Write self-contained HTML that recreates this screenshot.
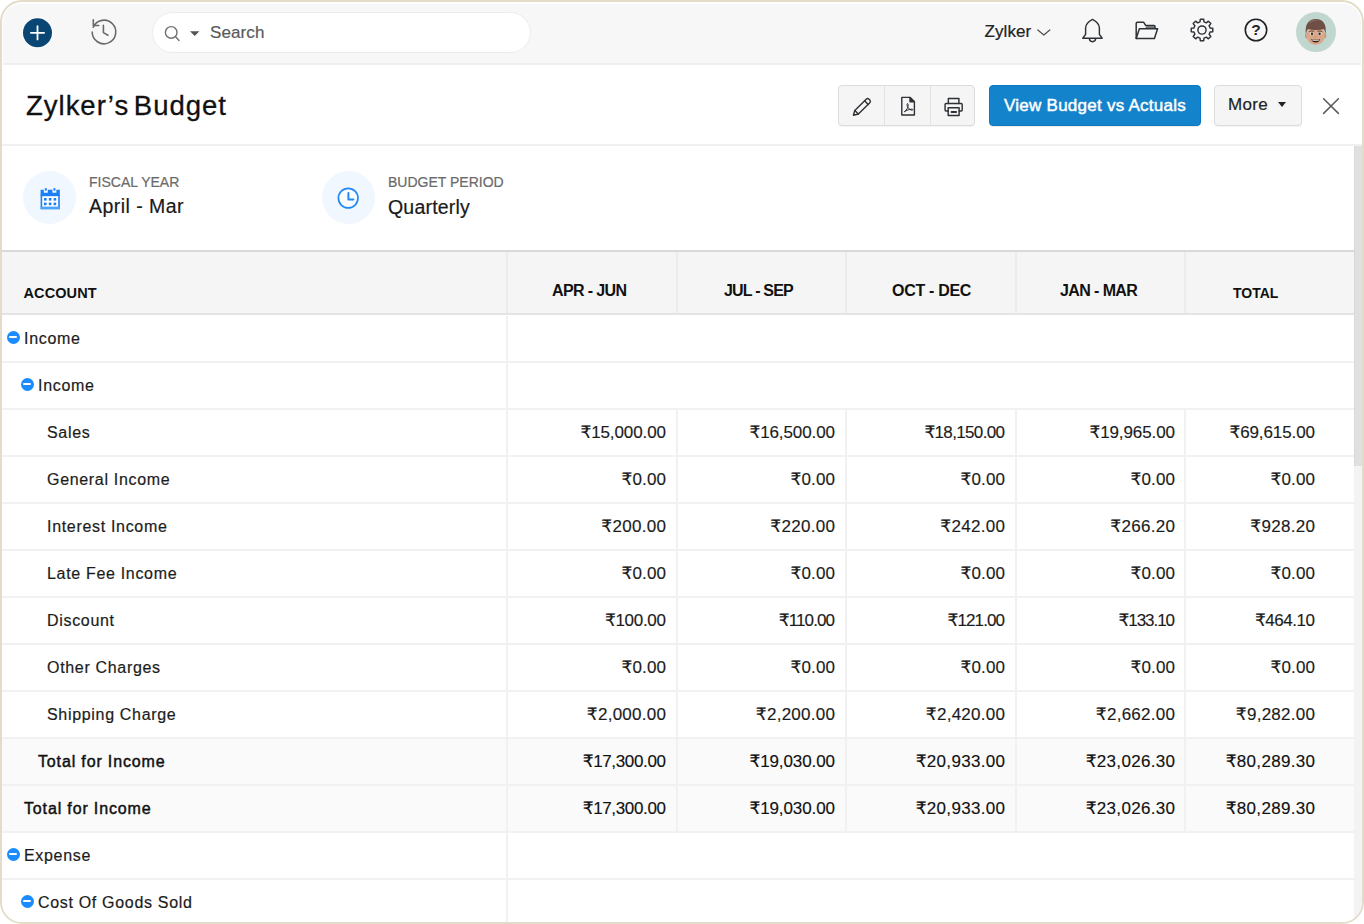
<!DOCTYPE html>
<html lang="en">
<head>
<meta charset="utf-8">
<title>Zylker's Budget</title>
<style>
*{box-sizing:border-box;margin:0;padding:0}
html,body{width:1364px;height:924px;overflow:hidden;background:#fff}
body{font-family:"Liberation Sans","DejaVu Sans",sans-serif;color:#1a1a1a;position:relative}
.frame{position:absolute;left:0;top:0;width:1364px;height:924px;border:2px solid #e3dcc9;border-radius:22px;overflow:hidden;background:#fff}
.abs{position:absolute}
.topbar{position:absolute;left:1px;top:2px;width:1358px;height:61px;background:#f7f7f7;border-bottom:2px solid #efefef;border-radius:18px 18px 0 0}
.topbar .in{position:absolute;left:-1px;top:-2px;width:1px;height:1px}
.search{position:absolute;left:150px;top:10px;width:379px;height:41px;border:1px solid #ebebeb;border-radius:21px;background:#fff}
.search span{position:absolute;left:57px;top:10px;font-size:17px;line-height:20px;color:#5a5a5a;letter-spacing:0.1px;-webkit-text-stroke:0.2px #5a5a5a}
.org{position:absolute;left:982.5px;top:19px;font-size:17px;line-height:22px;color:#222;letter-spacing:0.1px;-webkit-text-stroke:0.2px #222}
.title{position:absolute;left:24px;top:86px;font-size:27.5px;line-height:36px;letter-spacing:0.99px;word-spacing:-4px;-webkit-text-stroke:0.3px #111;color:#111;white-space:nowrap}
.hdrline{position:absolute;left:0;top:142px;width:1360px;height:2px;background:#f0f0f0}
.btngrp{position:absolute;left:836px;top:83px;width:137px;height:41px;border:1px solid #dcdcdc;border-radius:4px;background:#f5f5f5;box-shadow:0 1px 1px rgba(0,0,0,.05)}
.btngrp i{position:absolute;top:0;width:1px;height:39px;background:#e2e2e2}
.bluebtn{position:absolute;left:987px;top:83px;width:212px;height:41px;border:1px solid #0b78c2;border-radius:4px;background:#1383cb;color:#fff;font-size:17px;-webkit-text-stroke:0.45px #fff;letter-spacing:0.25px;text-align:center;line-height:40px;white-space:nowrap;box-shadow:0 1px 1px rgba(0,0,0,.08)}
.more{position:absolute;left:1212px;top:83px;width:88px;height:41px;border:1px solid #dcdcdc;border-radius:4px;background:#f5f5f5;box-shadow:0 1px 1px rgba(0,0,0,.05)}
.more span{position:absolute;left:13px;top:9px;font-size:17px;line-height:20px;color:#222;letter-spacing:0.3px;-webkit-text-stroke:0.2px #222}
.more b{position:absolute;left:62.6px;top:16.4px;width:0;height:0;border-left:4.8px solid transparent;border-right:4.8px solid transparent;border-top:5.2px solid #222}
.ic{position:absolute;border-radius:50%;background:#f1f7fe}
.lbl{position:absolute;font-size:14px;line-height:16px;color:#6a6a6a;-webkit-text-stroke:0.2px #6a6a6a;white-space:nowrap}
.val{position:absolute;-webkit-text-stroke:0.2px #1a1a1a;font-size:19.5px;letter-spacing:0.45px;line-height:24px;color:#1a1a1a;white-space:nowrap}
.scroll{position:absolute;left:1352px;top:144px;width:8px;height:780px;background:#f3f3f3}
.scroll i{position:absolute;left:0;top:0;width:8px;height:320px;background:#dfe0e0;border-left:1px solid #d9d9d9}
.thead{position:absolute;left:0;top:248px;width:1352px;height:65px;background:#f5f5f5;border-top:2px solid #d9d9d9;border-bottom:2px solid #e4e4e4}
.thead .c{position:absolute;top:0;height:61px;border-left:2px solid #ececec}
.th{position:absolute;white-space:nowrap;font-weight:bold;color:#111}
.row{position:absolute;left:0;width:1352px;height:47px;border-bottom:2px solid #f1f1f1;background:#fff}
.row.tot{background:#fafafa}
.row .n{position:absolute;top:12px;font-size:16px;line-height:22px;color:#1c1c1c;-webkit-text-stroke:0.2px #1c1c1c;white-space:nowrap;letter-spacing:0.68px}
.row.tot .n{color:#111;-webkit-text-stroke:0.45px #111;letter-spacing:0.85px}
.row.tot .v{color:#111;-webkit-text-stroke:0.15px #111}
.row .v{position:absolute;top:12px;font-size:17px;line-height:22px;color:#1c1c1c;-webkit-text-stroke:0.15px #1c1c1c;white-space:nowrap;text-align:right;width:160px}
.row .d{position:absolute;top:0;height:45px;width:2px;background:#f1f1f1}
.dot{position:absolute;width:13px;height:13px;border-radius:50%;background:#1a8cff}
.dot:after{content:"";position:absolute;left:2.5px;top:5.5px;width:8px;height:2px;background:#fff;border-radius:1px}
</style>
</head>
<body>
<div class="frame">
<div class="topbar"><div class="in">
  <svg class="abs" style="left:20px;top:15px" width="32" height="32" viewBox="0 0 32 32"><circle cx="15.5" cy="15.8" r="15.4" fill="#fff" fill-opacity=".85"/><circle cx="15.5" cy="15.8" r="14.5" fill="#0a4673"/><path d="M15.5 9.2v13.2M8.9 15.8h13.2" stroke="#fff" stroke-width="1.8" stroke-linecap="round"/></svg>
  <svg class="abs" style="left:86px;top:14px" width="32" height="32" viewBox="0 0 32 32" fill="none" stroke="#6a6a6a" stroke-width="1.6" stroke-linecap="round" stroke-linejoin="round"><path d="M5.2 11.2A11.8 11.8 0 1 1 4.2 16"/><path d="M5.3 3.8v5.7h5.5"/><path d="M15.4 9.4v7.2l4.6 2.6"/></svg>
  <div class="search">
    <svg class="abs" style="left:10.2px;top:11.2px" width="20" height="20" viewBox="0 0 20 20" fill="none" stroke="#707070" stroke-width="1.4" stroke-linecap="round"><circle cx="8.2" cy="8.4" r="5.8"/><path d="M12.6 12.8l3.4 3.6"/></svg>
    <svg class="abs" style="left:36px;top:17px" width="12" height="8" viewBox="0 0 12 8"><path d="M1 1.2h9.4L5.7 6z" fill="#555"/></svg>
    <span>Search</span>
  </div>
  <div class="org">Zylker</div>
  <svg class="abs" style="left:1034px;top:26px" width="16" height="10" viewBox="0 0 16 10" fill="none" stroke="#555" stroke-width="1.3" stroke-linecap="round" stroke-linejoin="round"><path d="M1.8 2l6 5 6-5"/></svg>
  <svg class="abs" style="left:1078px;top:14px" width="28" height="30" viewBox="0 0 28 30" fill="none" stroke="#2e3236" stroke-width="1.45" stroke-linejoin="round" stroke-linecap="round"><path d="M2.8 22.2L5.6 18.4V12C5.6 8.4 8.2 5.8 12.5 3.4C16.8 5.8 19.4 8.4 19.4 12V18.4L22.2 22.2Z"/><path d="M9.4 22.6a3.1 3.1 0 0 0 6.2 0"/></svg>
  <svg class="abs" style="left:1131px;top:16px" width="30" height="26" viewBox="0 0 30 26" fill="none" stroke="#2e3236" stroke-width="1.5" stroke-linejoin="round" stroke-linecap="round"><path d="M13.4 8.2h8.4v2.4h-9.8z" fill="#70757a" stroke="none"/><path d="M3.2 20.6V5.4a1.2 1.2 0 0 1 1.2-1.2h6.2l2.2 3.4h8.2a1 1 0 0 1 1 1v2"/><path d="M3.2 20.6L6.4 10.8H24.6L21.4 20.6Z"/></svg>
  <svg class="abs" style="left:1185.6px;top:14.4px" width="28" height="28" viewBox="0 0 28 28" fill="none" stroke="#2e3236" stroke-width="1.45" stroke-linejoin="round"><path d="M12.00 5.94 L12.29 3.23 L15.71 3.23 L16.00 5.94 L18.28 6.89 L20.41 5.18 L22.82 7.59 L21.11 9.72 L22.06 12.00 L24.77 12.29 L24.77 15.71 L22.06 16.00 L21.11 18.28 L22.82 20.41 L20.41 22.82 L18.28 21.11 L16.00 22.06 L15.71 24.77 L12.29 24.77 L12.00 22.06 L9.72 21.11 L7.59 22.82 L5.18 20.41 L6.89 18.28 L5.94 16.00 L3.23 15.71 L3.23 12.29 L5.94 12.00 L6.89 9.72 L5.18 7.59 L7.59 5.18 L9.72 6.89Z"/><circle cx="14" cy="14" r="4.1"/></svg>
  <svg class="abs" style="left:1240px;top:14.4px" width="28" height="28" viewBox="0 0 28 28"><circle cx="14" cy="14" r="10.7" fill="none" stroke="#1f2326" stroke-width="1.6"/><text x="14" y="19.3" text-anchor="middle" font-family="Liberation Sans, sans-serif" font-weight="bold" font-size="15.5" fill="#1f2326">?</text></svg>
  <svg class="abs" style="left:1293px;top:9px" width="42" height="42" viewBox="0 0 42 42"><circle cx="21" cy="21" r="20" fill="#c0d7cf"/><ellipse cx="11.6" cy="25" rx="1.6" ry="2.4" fill="#c99478"/><ellipse cx="29.8" cy="25" rx="1.6" ry="2.4" fill="#c99478"/><ellipse cx="20.7" cy="24.4" rx="9.2" ry="9.7" fill="#d9a88b"/><path d="M10.9 23.4C9.6 13.2 13.6 7.9 20.8 7.9C28.2 7.9 31.9 13.2 30.6 23.4C30.2 20.6 29.5 18.9 28.5 18C24 19.5 17.2 19.3 13.2 18C12.2 18.9 11.4 20.6 10.9 23.4Z" fill="#6e4f45"/><path d="M14.5 10.5C17 8.6 21 8.3 24 9.2C21 9.4 17.5 10 14.5 12.5Z" fill="#86665a"/><path d="M14.6 20.4q2-1 4.2-.2M22.8 20.2q2.200000000000001-.8 4.2.2" stroke="#5a4038" stroke-width=".9" fill="none" stroke-linecap="round"/><ellipse cx="16.8" cy="22.7" rx="2" ry="1.4" fill="#f4ece6"/><ellipse cx="24.8" cy="22.7" rx="2" ry="1.4" fill="#f4ece6"/><circle cx="17" cy="22.7" r="1.2" fill="#33241f"/><circle cx="24.6" cy="22.7" r="1.2" fill="#33241f"/><path d="M20.2 24.5q.6 1.8-.4 2.6" stroke="#c28f73" stroke-width=".8" fill="none"/><path d="M16.2 28.1q4.5 1.100000000000001 9 0q-.8 3.5-4.5 3.5q-3.7 0-4.5-3.5z" fill="#3d1f1a"/><path d="M17 28.5q3.7.8 7.4 0l-.3.9q-3.4.6-6.8 0z" fill="#f3ebe6"/></svg>
</div></div>
<div class="title">Zylker’s Budget</div>
<div class="btngrp"><i style="left:45px"></i><i style="left:91px"></i>
  <svg class="abs" style="left:9.4px;top:7.8px" width="26" height="24" viewBox="0 0 26 24" fill="none" stroke="#2e3236" stroke-width="1.4" stroke-linejoin="round" stroke-linecap="round"><path d="M5.4 21.2L6.8 16.4L18.2 5.2a2 2 0 0 1 2.800000000000001 0l0.8 0.8a2 2 0 0 1 0 2.8L10.4 20Z"/><path d="M16.6 6.8l3.6 3.6M6.8 16.4l3.6 3.6"/></svg>
  <svg class="abs" style="left:57px;top:7.4px" width="24" height="24" viewBox="0 0 24 24" fill="none" stroke="#2e3236" stroke-width="1.4" stroke-linejoin="round" stroke-linecap="round"><path d="M5.800000000000001 4.4h8.2l4.4 4.4v13.2H5.800000000000001Z"/><path d="M14 4.4v4.4h4.4Z" fill="#2e3236"/><path d="M8.6 18.6c2.2-1.4 3.6-4.4 3.6-7c0-1.400000000000002-1.2-1.400000000000002-1.2 0c0 2.8 2.4 5.2 5 5.600000000000001c1.2 0 1.2-1 0-1c-2.6 0-5.4 1-7.4 2.4z" stroke-width="1"/></svg>
  <svg class="abs" style="left:103px;top:7.6px" width="25" height="24" viewBox="0 0 26 24" preserveAspectRatio="none" fill="none" stroke="#2e3236" stroke-width="1.5" stroke-linejoin="round" stroke-linecap="round"><path d="M6.6 9.4V4.6h11v4.8"/><path d="M6.4 17H4.2a1 1 0 0 1-1-1v-5.600000000000001a1 1 0 0 1 1-1h15.8a1 1 0 0 1 1 1V16a1 1 0 0 1-1 1h-2.2"/><path d="M6.4 13.8h11.4v7.6H6.4Z"/><path d="M10 18h4.6" stroke-width="2.2"/></svg>
</div>
<div class="bluebtn">View Budget vs Actuals</div>
<div class="more"><span>More</span><b></b></div>
<svg class="abs" style="left:1319px;top:94px" width="20" height="20" viewBox="0 0 20 20" fill="none" stroke="#5a5a5a" stroke-width="1.5" stroke-linecap="round"><path d="M2.6 2.8l14.8 14.6M17.4 2.8L2.6 17.4"/></svg>
<div class="hdrline"></div>
<div class="scroll"><i></i></div>

<div class="ic" style="left:21px;top:169px;width:53px;height:53px"></div>
<svg class="abs" style="left:35.6px;top:183.8px" width="26" height="26" viewBox="0 0 26 26"><path d="M2.6 3.800000000000001h3.2v3h4V3.800000000000001h4.6v3h4V3.800000000000001h3.4v6.2H2.6Z" fill="#1c7ef6"/><rect x="3.4" y="9.4" width="17.6" height="13" fill="#fff" stroke="#1c7ef6" stroke-width="1.6"/><rect x="2.6" y="20.6" width="19.2" height="2.6" fill="#4ea2fb"/><g fill="#1c7ef6"><rect x="6" y="12" width="2.6" height="2.6"/><rect x="10.8" y="12" width="2.6" height="2.6"/><rect x="15.6" y="12" width="2.6" height="2.6"/><rect x="6" y="16.6" width="2.6" height="2.6"/><rect x="10.8" y="16.6" width="2.6" height="2.6"/><rect x="15.6" y="16.6" width="2.6" height="2.6"/><rect x="6.800000000000001" y="2.2" width="2" height="2.4"/><rect x="15.4" y="2.2" width="2" height="2.4"/></g></svg>
<div class="lbl" style="left:87px;top:172px">FISCAL YEAR</div>
<div class="val" style="left:87px;top:192px">April - Mar</div>
<div class="ic" style="left:320px;top:169px;width:53px;height:53px"></div>
<svg class="abs" style="left:333px;top:183px" width="26" height="26" viewBox="0 0 26 26" fill="none" stroke="#2389f5" stroke-linecap="round" stroke-linejoin="round"><circle cx="13.2" cy="13.1" r="9.8" stroke-width="1.7" fill="#f9fcff"/><path d="M13.4 8v6.6h5" stroke-width="2"/></svg>
<div class="lbl" style="left:386px;top:172px">BUDGET PERIOD</div>
<div class="val" style="left:386px;top:193px;letter-spacing:0.2px">Quarterly</div>

<div class="thead">
  <div class="c" style="left:504px;width:170px"></div>
  <div class="c" style="left:674px;width:170px"></div>
  <div class="c" style="left:843px;width:170px"></div>
  <div class="c" style="left:1013px;width:170px"></div>
  <div class="c" style="left:1182px;width:170px"></div>
  <div class="th" style="left:21.5px;top:32px;font-size:14.5px;line-height:18px;letter-spacing:0.1px">ACCOUNT</div>
  <div class="th" style="left:550px;top:29px;font-size:16px;line-height:20px;letter-spacing:-0.62px">APR - JUN</div>
  <div class="th" style="left:722px;top:29px;font-size:16px;line-height:20px;letter-spacing:-0.8px">JUL - SEP</div>
  <div class="th" style="left:890px;top:29px;font-size:16px;line-height:20px;letter-spacing:-0.3px">OCT - DEC</div>
  <div class="th" style="left:1058px;top:29px;font-size:16px;line-height:20px;letter-spacing:-0.6px">JAN - MAR</div>
  <div class="th" style="left:1231px;top:32px;font-size:14px;line-height:18px">TOTAL</div>
</div>
<div class="row" style="top:314px"><div class="d" style="left:504px"></div><div class="dot" style="left:4.9px;top:14.5px"></div><div class="n" style="left:22px">Income</div></div>
<div class="row" style="top:361px"><div class="d" style="left:504px"></div><div class="dot" style="left:18.9px;top:14.5px"></div><div class="n" style="left:36px">Income</div></div>
<div class="row" style="top:408px"><div class="d" style="left:504px"></div><div class="d" style="left:674px"></div><div class="d" style="left:843px"></div><div class="d" style="left:1013px"></div><div class="d" style="left:1182px"></div><div class="n" style="left:45px">Sales</div><div class="v" style="left:503.90px;letter-spacing:-0.10px">₹15,000.00</div><div class="v" style="left:672.90px;letter-spacing:-0.10px">₹16,500.00</div><div class="v" style="left:842.35px;letter-spacing:-0.65px">₹18,150.00</div><div class="v" style="left:1012.90px;letter-spacing:-0.10px">₹19,965.00</div><div class="v" style="left:1152.90px;letter-spacing:-0.10px">₹69,615.00</div></div>
<div class="row" style="top:455px"><div class="d" style="left:504px"></div><div class="d" style="left:674px"></div><div class="d" style="left:843px"></div><div class="d" style="left:1013px"></div><div class="d" style="left:1182px"></div><div class="n" style="left:45px">General Income</div><div class="v" style="left:504.14px;letter-spacing:0.14px">₹0.00</div><div class="v" style="left:673.14px;letter-spacing:0.14px">₹0.00</div><div class="v" style="left:843.14px;letter-spacing:0.14px">₹0.00</div><div class="v" style="left:1013.14px;letter-spacing:0.14px">₹0.00</div><div class="v" style="left:1153.14px;letter-spacing:0.14px">₹0.00</div></div>
<div class="row" style="top:502px"><div class="d" style="left:504px"></div><div class="d" style="left:674px"></div><div class="d" style="left:843px"></div><div class="d" style="left:1013px"></div><div class="d" style="left:1182px"></div><div class="n" style="left:45px">Interest Income</div><div class="v" style="left:504.31px;letter-spacing:0.31px">₹200.00</div><div class="v" style="left:673.31px;letter-spacing:0.31px">₹220.00</div><div class="v" style="left:843.31px;letter-spacing:0.31px">₹242.00</div><div class="v" style="left:1013.31px;letter-spacing:0.31px">₹266.20</div><div class="v" style="left:1153.31px;letter-spacing:0.31px">₹928.20</div></div>
<div class="row" style="top:549px"><div class="d" style="left:504px"></div><div class="d" style="left:674px"></div><div class="d" style="left:843px"></div><div class="d" style="left:1013px"></div><div class="d" style="left:1182px"></div><div class="n" style="left:45px">Late Fee Income</div><div class="v" style="left:504.14px;letter-spacing:0.14px">₹0.00</div><div class="v" style="left:673.14px;letter-spacing:0.14px">₹0.00</div><div class="v" style="left:843.14px;letter-spacing:0.14px">₹0.00</div><div class="v" style="left:1013.14px;letter-spacing:0.14px">₹0.00</div><div class="v" style="left:1153.14px;letter-spacing:0.14px">₹0.00</div></div>
<div class="row" style="top:596px"><div class="d" style="left:504px"></div><div class="d" style="left:674px"></div><div class="d" style="left:843px"></div><div class="d" style="left:1013px"></div><div class="d" style="left:1182px"></div><div class="n" style="left:45px">Discount</div><div class="v" style="left:503.71px;letter-spacing:-0.29px">₹100.00</div><div class="v" style="left:672.11px;letter-spacing:-0.89px">₹110.00</div><div class="v" style="left:842.11px;letter-spacing:-0.89px">₹121.00</div><div class="v" style="left:1011.93px;letter-spacing:-1.07px">₹133.10</div><div class="v" style="left:1152.53px;letter-spacing:-0.47px">₹464.10</div></div>
<div class="row" style="top:643px"><div class="d" style="left:504px"></div><div class="d" style="left:674px"></div><div class="d" style="left:843px"></div><div class="d" style="left:1013px"></div><div class="d" style="left:1182px"></div><div class="n" style="left:45px">Other Charges</div><div class="v" style="left:504.14px;letter-spacing:0.14px">₹0.00</div><div class="v" style="left:673.14px;letter-spacing:0.14px">₹0.00</div><div class="v" style="left:843.14px;letter-spacing:0.14px">₹0.00</div><div class="v" style="left:1013.14px;letter-spacing:0.14px">₹0.00</div><div class="v" style="left:1153.14px;letter-spacing:0.14px">₹0.00</div></div>
<div class="row" style="top:690px"><div class="d" style="left:504px"></div><div class="d" style="left:674px"></div><div class="d" style="left:843px"></div><div class="d" style="left:1013px"></div><div class="d" style="left:1182px"></div><div class="n" style="left:45px">Shipping Charge</div><div class="v" style="left:504.27px;letter-spacing:0.27px">₹2,000.00</div><div class="v" style="left:673.27px;letter-spacing:0.27px">₹2,200.00</div><div class="v" style="left:843.27px;letter-spacing:0.27px">₹2,420.00</div><div class="v" style="left:1013.27px;letter-spacing:0.27px">₹2,662.00</div><div class="v" style="left:1153.27px;letter-spacing:0.27px">₹9,282.00</div></div>
<div class="row tot" style="top:737px"><div class="d" style="left:504px"></div><div class="d" style="left:674px"></div><div class="d" style="left:843px"></div><div class="d" style="left:1013px"></div><div class="d" style="left:1182px"></div><div class="n" style="left:36px">Total for Income</div><div class="v" style="left:503.65px;letter-spacing:-0.35px">₹17,300.00</div><div class="v" style="left:672.90px;letter-spacing:-0.10px">₹19,030.00</div><div class="v" style="left:843.32px;letter-spacing:0.32px">₹20,933.00</div><div class="v" style="left:1013.32px;letter-spacing:0.32px">₹23,026.30</div><div class="v" style="left:1153.32px;letter-spacing:0.32px">₹80,289.30</div></div>
<div class="row tot" style="top:784px"><div class="d" style="left:504px"></div><div class="d" style="left:674px"></div><div class="d" style="left:843px"></div><div class="d" style="left:1013px"></div><div class="d" style="left:1182px"></div><div class="n" style="left:22px">Total for Income</div><div class="v" style="left:503.65px;letter-spacing:-0.35px">₹17,300.00</div><div class="v" style="left:672.90px;letter-spacing:-0.10px">₹19,030.00</div><div class="v" style="left:843.32px;letter-spacing:0.32px">₹20,933.00</div><div class="v" style="left:1013.32px;letter-spacing:0.32px">₹23,026.30</div><div class="v" style="left:1153.32px;letter-spacing:0.32px">₹80,289.30</div></div>
<div class="row" style="top:831px"><div class="d" style="left:504px"></div><div class="dot" style="left:4.9px;top:14.5px"></div><div class="n" style="left:22px">Expense</div></div>
<div class="row" style="top:878px"><div class="d" style="left:504px"></div><div class="dot" style="left:18.9px;top:14.5px"></div><div class="n" style="left:36px">Cost Of Goods Sold</div></div>
</div>
</body>
</html>
